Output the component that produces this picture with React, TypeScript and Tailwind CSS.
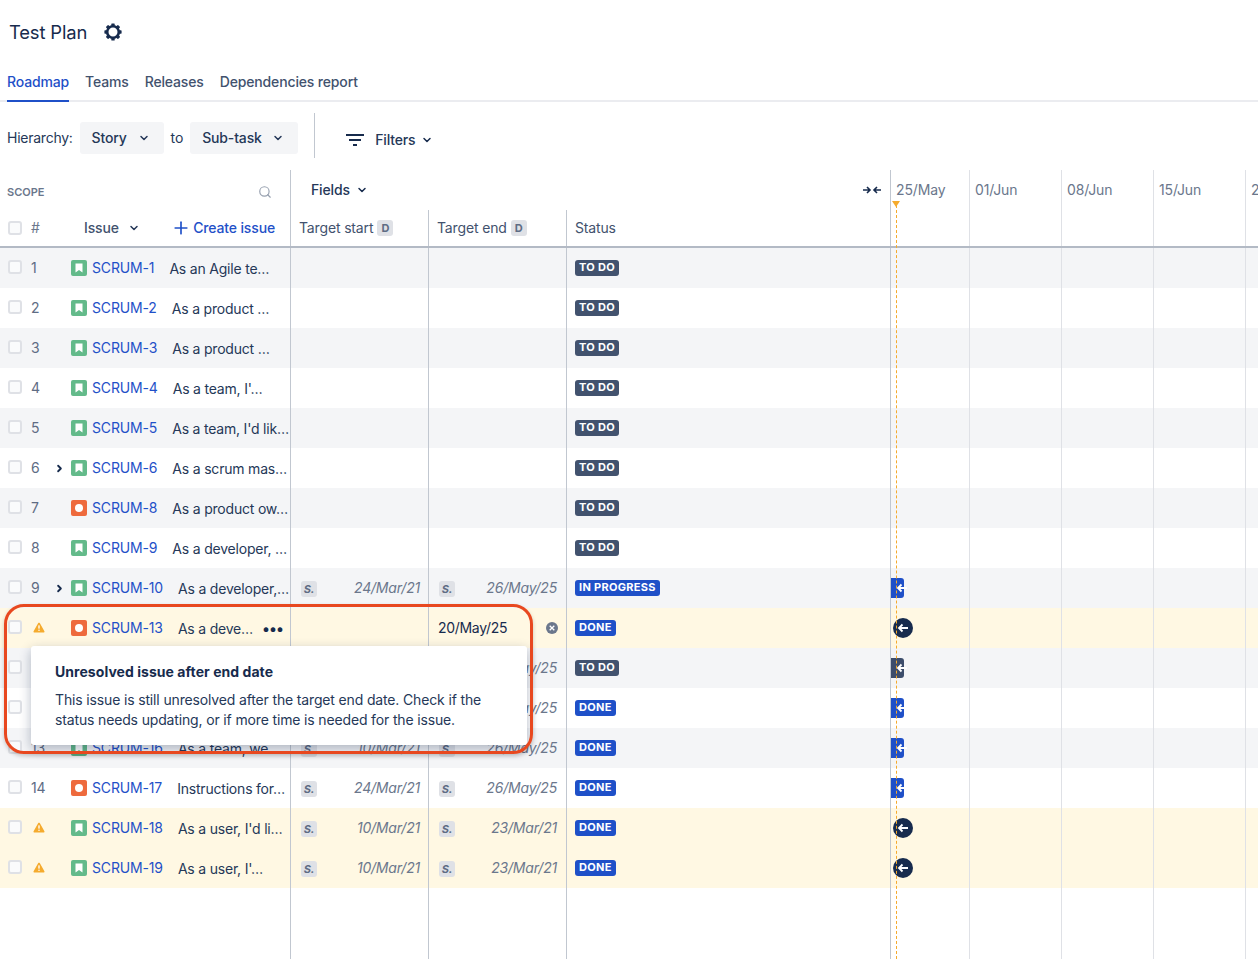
import { ChevronDown, ChevronRight, Plus, Search } from 'lucide-react'

type Row = {
  n: number
  key: string
  summary: string
  kind: 'story' | 'bug'
  caret?: boolean
  warn?: boolean
  start?: string
  end?: string
  status: 'TO DO' | 'IN PROGRESS' | 'DONE'
}

const rows: Row[] = [
  { n: 1, key: 'SCRUM-1', summary: 'As an Agile te…', kind: 'story', status: 'TO DO' },
  { n: 2, key: 'SCRUM-2', summary: 'As a product …', kind: 'story', status: 'TO DO' },
  { n: 3, key: 'SCRUM-3', summary: 'As a product …', kind: 'story', status: 'TO DO' },
  { n: 4, key: 'SCRUM-4', summary: "As a team, I'…", kind: 'story', status: 'TO DO' },
  { n: 5, key: 'SCRUM-5', summary: "As a team, I'd lik…", kind: 'story', status: 'TO DO' },
  { n: 6, key: 'SCRUM-6', summary: 'As a scrum mas…', kind: 'story', caret: true, status: 'TO DO' },
  { n: 7, key: 'SCRUM-8', summary: 'As a product ow…', kind: 'bug', status: 'TO DO' },
  { n: 8, key: 'SCRUM-9', summary: 'As a developer, …', kind: 'story', status: 'TO DO' },
  { n: 9, key: 'SCRUM-10', summary: 'As a developer,…', kind: 'story', caret: true, start: '24/Mar/21', end: '26/May/25', status: 'IN PROGRESS' },
  { n: 10, key: 'SCRUM-13', summary: 'As a deve…', kind: 'bug', warn: true, status: 'DONE' },
  { n: 11, key: 'SCRUM-14', summary: 'As a user, I…', kind: 'story', start: '10/Mar/21', end: '26/May/25', status: 'TO DO' },
  { n: 12, key: 'SCRUM-15', summary: 'As a team, …', kind: 'story', start: '10/Mar/21', end: '26/May/25', status: 'DONE' },
  { n: 13, key: 'SCRUM-16', summary: 'As a team, we…', kind: 'story', start: '10/Mar/21', end: '26/May/25', status: 'DONE' },
  { n: 14, key: 'SCRUM-17', summary: 'Instructions for…', kind: 'bug', start: '24/Mar/21', end: '26/May/25', status: 'DONE' },
  { n: 15, key: 'SCRUM-18', summary: "As a user, I'd li…", kind: 'story', warn: true, start: '10/Mar/21', end: '23/Mar/21', status: 'DONE' },
  { n: 16, key: 'SCRUM-19', summary: "As a user, I'…", kind: 'story', warn: true, start: '10/Mar/21', end: '23/Mar/21', status: 'DONE' },
]

function Checkbox() {
  return <span className="block h-[14px] w-[14px] shrink-0 rounded-[3px] border-2 border-[#dfe1e6] bg-[#fafbfc]" />
}

function IssueIcon({ kind }: { kind: Row['kind'] }) {
  if (kind === 'bug') {
    return (
      <span className="flex h-4 w-4 shrink-0 items-center justify-center rounded-[2px] bg-[#ee6a3d]">
        <span className="h-2 w-2 rounded-full bg-white" />
      </span>
    )
  }
  return (
    <span className="flex h-4 w-4 shrink-0 items-center justify-center rounded-[2px] bg-[#63ba8a]">
      <svg width="8" height="10" viewBox="0 0 8 10">
        <path d="M0.5 0.5h7v9L4 7 0.5 9.5z" fill="#fff" />
      </svg>
    </span>
  )
}

function WarnIcon() {
  return (
    <svg width="12" height="11" viewBox="0 0 14 13" className="ml-[2px] -mt-[1px] shrink-0">
      <path d="M7 .8c.4 0 .7.2.9.5l5.500 9.700c.4.7-.1 1.500-.9 1.500H1.500c-.8 0-1.300-.8-.9-1.500L6.100 1.300C6.300 1 6.600.8 7 .8z" fill="#f5ab2e" />
      <rect x="6.200" y="3.800" width="1.600" height="4.200" rx=".5" fill="#fff" />
      <circle cx="7" cy="9.700" r=".9" fill="#fff" />
    </svg>
  )
}

function GearIcon() {
  const teeth = [0, 45, 90, 135, 180, 225, 270, 315]
  return (
    <svg width="18" height="18" viewBox="0 0 18 18" className="ml-[17px] shrink-0">
      <circle cx="9" cy="9" r="5.800" fill="none" stroke="#172b4d" strokeWidth="2.600" />
      {teeth.map((deg) => (
        <rect key={deg} x="7.300" y="0.400" width="3.400" height="3.400" rx=".6" fill="#172b4d" transform={`rotate(${deg} 9 9)`} />
      ))}
    </svg>
  )
}

function Lozenge({ status }: { status: Row['status'] }) {
  const tone = status === 'TO DO' ? 'bg-[#42526e]' : 'bg-[#1f50c8]'
  return (
    <span className={`-mt-[1px] inline-flex h-4 items-center rounded-[3px] px-1 text-[11px] font-bold leading-none tracking-[0.3px] text-white ${tone}`}>
      {status}
    </span>
  )
}

function DateCell({ date, pad }: { date?: string; pad: string }) {
  if (!date) return null
  return (
    <div className={`flex h-full items-center justify-between ${pad}`}>
      <span className="mt-[2px] flex h-4 w-4 items-center justify-center rounded-[3px] bg-[#dfe1e6] text-[11px] font-bold italic text-[#5e6c84]">
        S.
      </span>
      <span className="text-sm italic tracking-[-0.2px] text-[#6b778c]">{date}</span>
    </div>
  )
}

function Arrow() {
  return (
    <svg width="12" height="10" viewBox="0 0 12 10" fill="none" stroke="#fff" strokeWidth="1.800">
      <path d="M11 5H2M5.500 1.500 2 5l3.500 3.500" />
    </svg>
  )
}

function TimelineBar({ row }: { row: Row }) {
  if (row.warn) {
    return (
      <span className="absolute left-[2px] top-[10px] flex h-5 w-5 items-center justify-center rounded-full bg-[#172b4d]">
        <Arrow />
      </span>
    )
  }
  if (!row.start) return null
  const tone = row.status === 'TO DO' ? 'bg-[#3d4d6b]' : 'bg-[#1f50c8]'
  return (
    <span className={`absolute left-0 top-[10px] flex h-5 w-[13px] items-center justify-end rounded-r-[3px] ${tone}`}>
      <span className="-mr-1">
        <Arrow />
      </span>
    </span>
  )
}

function TimelineCols({ row }: { row?: Row }) {
  return (
    <div className="relative flex h-full flex-1">
      <div className="relative w-[79px] shrink-0 border-l border-[#c1c7d0]">{row && <TimelineBar row={row} />}</div>
      <div className="w-[92px] shrink-0 border-l border-[#dfe1e6]" />
      <div className="w-[92px] shrink-0 border-l border-[#dfe1e6]" />
      <div className="w-[92px] shrink-0 border-l border-[#dfe1e6]" />
      <div className="flex-1 border-l border-[#dfe1e6]" />
    </div>
  )
}

function IssueRow({ row, index }: { row: Row; index: number }) {
  const bg = row.warn ? 'bg-[#fff8e3]' : index % 2 === 0 ? 'bg-[#f4f5f7]' : 'bg-white'
  const active = row.n === 10
  return (
    <div className={`flex h-10 ${bg}`}>
      <div className="flex h-full w-[290px] shrink-0 items-center">
        <span className="ml-[8px] -mt-[2px]">
          <Checkbox />
        </span>
        <span className="ml-[9px] flex w-[24px] items-center text-sm text-[#5e6c84]">
          {row.warn ? <WarnIcon /> : row.n}
        </span>
        <span className="flex w-[16px] items-center">
          {row.caret && <ChevronRight size={11} strokeWidth={4} className="ml-[-1px] text-[#172b4d]" />}
        </span>
        <IssueIcon kind={row.kind} />
        <span className="ml-[5px] whitespace-nowrap text-sm text-[#1f50c8]">{row.key}</span>
        <span className="ml-[15px] whitespace-nowrap pt-[1px] text-sm tracking-[-0.2px] text-[#253858]">{row.summary}</span>
        {active && <span className="ml-[10px] text-[15px] font-black leading-none tracking-[1px] text-[#172b4d]">•••</span>}
      </div>
      <div className="h-full w-[138px] shrink-0 border-l border-[#c1c7d0]">
        <DateCell date={row.start} pad="pl-[10px] pr-[8px]" />
      </div>
      <div className="h-full w-[138px] shrink-0 border-l border-[#c1c7d0]">
        {active ? (
          <div className="flex h-full items-center justify-between pl-[9px] pr-[8px]">
            <span className="text-sm tracking-[-0.3px] text-[#172b4d]">20/May/25</span>
            <span className="flex h-3 w-3 items-center justify-center rounded-full bg-[#6b778c] text-white">
              <svg width="6" height="6" viewBox="0 0 6 6" stroke="#fff" strokeWidth="1.300">
                <path d="M.7.7l4.600 4.600M5.300.7.7 5.300" />
              </svg>
            </span>
          </div>
        ) : (
          <DateCell date={row.end} pad="pl-[10px] pr-[9px]" />
        )}
      </div>
      <div className="flex h-full w-[324px] shrink-0 items-center border-l border-[#c1c7d0] pl-[8px]">
        <Lozenge status={row.status} />
      </div>
      <TimelineCols row={row} />
    </div>
  )
}

export default function App() {
  return (
    <div className="relative flex h-[959px] w-[1258px] flex-col overflow-hidden bg-white font-['Inter',sans-serif] tracking-[-0.15px] text-[#172b4d]">
      {/* Title */}
      <div className="flex h-[64px] shrink-0 items-center pl-[9px]">
        <h1 className="text-[18.4px] font-normal leading-none text-[#172b4d]">Test Plan</h1>
        <GearIcon />
      </div>

      {/* Tabs */}
      <div className="flex h-[38px] shrink-0 items-stretch gap-4 border-b-2 border-[#ebecf0] pl-[7px]">
        <div className="-mb-[2px] flex items-center border-b-2 border-[#1f50c8] text-sm font-medium text-[#1f50c8]">Roadmap</div>
        <div className="flex items-center text-sm font-medium text-[#42526e]">Teams</div>
        <div className="flex items-center text-sm font-medium text-[#42526e]">Releases</div>
        <div className="flex items-center text-sm font-medium text-[#42526e]">Dependencies report</div>
      </div>

      {/* Toolbar */}
      <div className="flex h-[68px] shrink-0 items-center pl-[7px] pt-[4px]">
        <span className="text-sm tracking-[-0.25px] text-[#253858]">Hierarchy:</span>
        <button className="ml-[7px] flex h-8 w-[84px] items-center rounded-[3px] bg-[#f4f5f7] pl-3 text-sm font-medium text-[#253858]">
          Story
          <ChevronDown size={12} strokeWidth={3} className="ml-[11px]" />
        </button>
        <span className="ml-[7px] text-sm text-[#253858]">to</span>
        <button className="ml-[7px] flex h-8 w-[108px] items-center rounded-[3px] bg-[#f4f5f7] pl-3 text-sm font-medium text-[#253858]">
          Sub-task
          <ChevronDown size={12} strokeWidth={3} className="ml-[10px]" />
        </button>
        <span className="ml-4 -mt-[5px] h-[45px] w-px bg-[#c1c7d0]" />
        <svg width="18" height="12" viewBox="0 0 18 12" className="ml-[31px] mt-[4px]" fill="#172b4d">
          <rect x="0" y="0" width="18" height="2" />
          <rect x="3" y="5" width="12" height="2" />
          <rect x="7" y="10" width="4" height="2" />
        </svg>
        <span className="ml-[11px] mt-[4px] text-sm font-medium text-[#253858]">Filters</span>
        <ChevronDown size={12} strokeWidth={3} className="ml-[6px] mt-[4px]" />
      </div>

      {/* Header top row */}
      <div className="flex h-10 shrink-0">
        <div className="flex w-[290px] shrink-0 items-center justify-between pl-[7px] pr-[18px] pt-[4px]">
          <span className="text-[11px] font-semibold tracking-normal text-[#6b778c]">SCOPE</span>
          <Search size={14} strokeWidth={2} className="text-[#97a0af]" />
        </div>
        <div className="flex w-[600px] shrink-0 items-center border-l border-[#c1c7d0] pl-5">
          <span className="text-sm font-medium text-[#253858]">Fields</span>
          <ChevronDown size={12} strokeWidth={3} className="ml-[6px]" />
          <svg width="18" height="10" viewBox="0 0 18 10" className="ml-auto mr-[9px] -mt-[1px]" fill="none" stroke="#172b4d" strokeWidth="1.600">
            <path d="M0 5h7M4 2l3 3-3 3M18 5h-7M14 2l-3 3 3 3" />
          </svg>
        </div>
        <div className="flex flex-1 text-sm text-[#6b778c]">
          <div className="w-[79px] shrink-0 border-l border-[#c1c7d0] pl-[5px] pt-[10px]">25/May</div>
          <div className="w-[92px] shrink-0 border-l border-[#dfe1e6] pl-[5px] pt-[10px]">01/Jun</div>
          <div className="w-[92px] shrink-0 border-l border-[#dfe1e6] pl-[5px] pt-[10px]">08/Jun</div>
          <div className="w-[92px] shrink-0 border-l border-[#dfe1e6] pl-[5px] pt-[10px]">15/Jun</div>
          <div className="flex-1 overflow-hidden whitespace-nowrap border-l border-[#dfe1e6] pl-[5px] pt-[10px]">22/Jun</div>
        </div>
      </div>

      {/* Header column row */}
      <div className="flex h-[38px] shrink-0 border-b-2 border-[#b3bac5]">
        <div className="flex w-[290px] shrink-0 items-center pr-[15px]">
          <span className="ml-[8px]">
            <Checkbox />
          </span>
          <span className="ml-[9px] w-[53px] text-sm text-[#6b778c]">#</span>
          <span className="text-sm font-medium text-[#42526e]">Issue</span>
          <ChevronDown size={12} strokeWidth={3} className="ml-[9px] text-[#253858]" />
          <Plus size={20} strokeWidth={2} className="ml-auto text-[#1f50c8]" />
          <span className="ml-[2px] text-sm font-medium text-[#1f50c8]">Create issue</span>
        </div>
        <div className="flex w-[138px] shrink-0 items-center border-l border-[#c1c7d0] pl-2">
          <span className="text-sm text-[#42526e]">Target start</span>
          <span className="ml-1 flex h-4 w-4 items-center justify-center rounded-[3px] bg-[#dfe1e6] text-[11px] font-bold text-[#5e6c84]">D</span>
        </div>
        <div className="flex w-[138px] shrink-0 items-center border-l border-[#c1c7d0] pl-2">
          <span className="text-sm text-[#42526e]">Target end</span>
          <span className="ml-1 flex h-4 w-4 items-center justify-center rounded-[3px] bg-[#dfe1e6] text-[11px] font-bold text-[#5e6c84]">D</span>
        </div>
        <div className="flex w-[324px] shrink-0 items-center border-l border-[#c1c7d0] pl-2 text-sm text-[#42526e]">Status</div>
        <TimelineCols />
      </div>

      {/* Rows */}
      {rows.map((row, i) => (
        <IssueRow key={row.key} row={row} index={i} />
      ))}

      {/* Empty space below rows keeps the column rules going */}
      <div className="flex flex-1">
        <div className="w-[290px] shrink-0" />
        <div className="w-[138px] shrink-0 border-l border-[#c1c7d0]" />
        <div className="w-[138px] shrink-0 border-l border-[#c1c7d0]" />
        <div className="w-[324px] shrink-0 border-l border-[#c1c7d0]" />
        <TimelineCols />
      </div>

      {/* Today marker */}
      <div className="pointer-events-none absolute bottom-0 left-[896px] top-[205px] border-l border-dashed border-[#f5ab2e]" />
      <div className="absolute left-[892px] top-[201px] h-0 w-0 border-x-[4px] border-t-[6px] border-x-transparent border-t-[#f5ab2e]" />

      {/* Tooltip */}
      <div className="absolute left-[31px] top-[646px] h-[99px] w-[496px] rounded-[3px] bg-white pl-6 pr-5 pt-[16px] shadow-[0_4px_12px_rgba(9,30,66,0.3)]">
        <div className="text-sm font-bold leading-5 tracking-[0.05px] text-[#172b4d]">Unresolved issue after end date</div>
        <p className="mt-2 text-sm leading-5 text-[#253858]">
          This issue is still unresolved after the target end date. Check if the status needs updating, or if more time is needed for the issue.
        </p>
      </div>

      {/* Callout */}
      <div className="pointer-events-none absolute left-[4px] top-[604px] h-[150px] w-[529px] rounded-[20px] border-[3px] border-[#e8481f] shadow-[0_2px_4px_rgba(0,0,0,0.2)]" />
    </div>
  )
}
